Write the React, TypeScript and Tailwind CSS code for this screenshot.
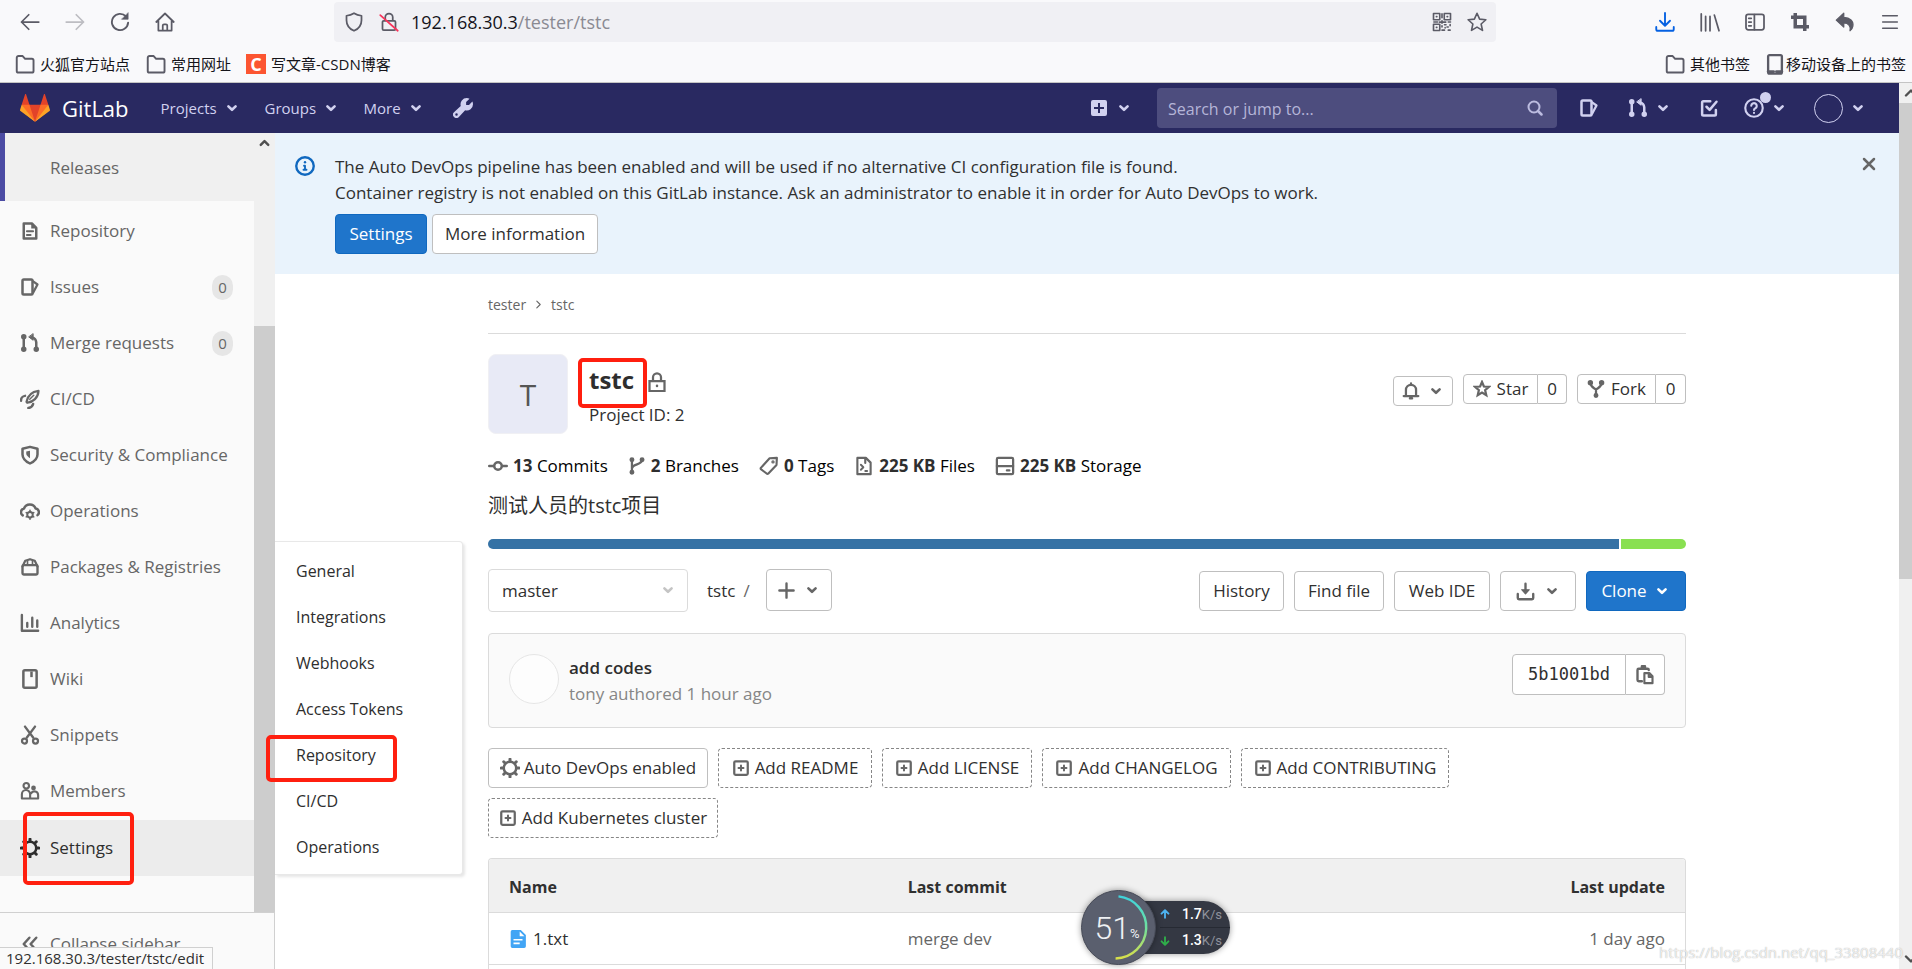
import React from "react";

type IconProps = { className?: string; children: React.ReactNode; box?: string; width?: number };

function Icon({ className = "size-5", children, box = "0 0 16 16", width = 2 }: IconProps) {
  return (
    <svg
      aria-hidden="true"
      viewBox={box}
      className={`shrink-0 ${className}`}
      fill="none"
      stroke="currentColor"
      strokeWidth={width}
      strokeLinecap="round"
      strokeLinejoin="round"
    >
      {children}
    </svg>
  );
}

const Chevron = ({ className = "size-[18px]" }: { className?: string }) => (
  <Icon className={className} width={2.3}><path d="M4.800 6.500 8 9.600l3.200-3.100" /></Icon>
);

const icons = {
  doc: (
    <>
      <path d="M3 2h6.500L13 5.500V14H3z" />
      <path d="M9 1.500v4.500h4.500z" fill="currentColor" stroke="none" />
      <path d="M5.500 8.200h5M5.500 11.200h3" strokeWidth="1.500" />
    </>
  ),
  issues: (
    <>
      <rect x="2" y="2" width="8" height="12" rx="1" />
      <path d="M10.500 3.500 14 6l-3.500 6.500" strokeWidth="1.800" />
    </>
  ),
  merge: (
    <>
      <path d="M3 3v10M13 13V7.500A4.500 4.500 0 0 0 9.500 3.500" />
      <circle cx="3" cy="3" r="1.200" fill="currentColor" /><circle cx="3" cy="13" r="1.200" fill="currentColor" />
      <circle cx="13" cy="13" r="1.200" fill="currentColor" />
      <path d="M10.500.8v5L7.200 3.300z" fill="currentColor" strokeWidth=".8" />
    </>
  ),
  rocket: (
    <>
      <path d="M5.200 10.300C6 6 9 2.300 14.800 1.500 14.500 7 10.500 10.500 5.800 11z" strokeWidth="1.800" />
      <path d="M7.800 8.200 11 5" strokeWidth="1.200" />
      <path d="M4 5.500C2 5.700.8 7.500.8 9.300M10.500 12c-.5 1.700-2 3-3.800 3.200" strokeWidth="2" />
    </>
  ),
  shield: (
    <>
      <path d="M8 1.500 14 3v4.500c0 3-2.500 5.500-6 7.300-3.500-1.800-6-4.300-6-7.300V3z" />
      <path d="M8 4.500v6C6.500 9.500 5 8.200 5 7V5.200z" fill="currentColor" stroke="none" />
    </>
  ),
  cloud: (
    <>
      <path d="M2.200 11.500A3 3 0 0 1 3.200 6 5 5 0 0 1 12.500 6a3 3 0 0 1 1.500 5.300" />
      <circle cx="8" cy="11" r="2.200" strokeWidth="1.600" />
      <path d="M8 7.500v1M8 13.500v1M5 9.300l.8.400M10.200 12.300l.8.400M5 12.700l.8-.4M10.200 9.700l.8-.4" strokeWidth="1.300" />
    </>
  ),
  pack: (
    <>
      <path d="M2 7.500 4.200 3 8 1.800 11.800 3 14 7.500" strokeWidth="1.800" />
      <rect x="2" y="6.500" width="12" height="7.500" rx="1" strokeWidth="1.900" />
      <path d="M6 6.500V3M10 6.500V3" strokeWidth="1.300" />
    </>
  ),
  chart: (
    <path d="M1.500 1.500V14.200h13M5.800 11V8M9.800 11V3.800M13.800 11V6" strokeWidth="1.900" />
  ),
  book: (
    <>
      <rect x="2.700" y="1" width="10.600" height="14" rx="1.200" />
      <path d="M9.200 2v4.500" strokeLinecap="butt" />
    </>
  ),
  scissors: (
    <>
      <path d="M4 1.300 10.500 10M12 1.300 5.500 10" strokeWidth="1.900" />
      <circle cx="3.600" cy="12.800" r="2" strokeWidth="1.800" /><circle cx="12.400" cy="12.800" r="2" strokeWidth="1.800" />
    </>
  ),
  users: (
    <>
      <circle cx="5" cy="3.800" r="2.200" strokeWidth="1.700" /><circle cx="10.800" cy="5.500" r="1.900" fill="currentColor" stroke="none" />
      <path d="M1.500 14V10.500a3.300 3.300 0 0 1 6.600 0V14zM9 9.700a3 3 0 0 1 5.500 1.500V14H8.500" strokeWidth="1.700" />
    </>
  ),
  gear: (
    <>
      <circle cx="8" cy="8" r="5" />
      <path d="M8 .9v1.500M8 13.600v1.500M.9 8h1.500M13.600 8h1.500M3 3l1 1M12 12l1 1M3 13l1-1M12 4l1-1" strokeWidth="2.400" />
    </>
  ),
  plusBox: (
    <>
      <rect x="2" y="2" width="12" height="12" rx="1.200" />
      <path d="M8 5.800v4.400M5.800 8h4.400" strokeWidth="1.800" />
    </>
  ),
  folder: <path d="M2 13V3.500A1.300 1.300 0 0 1 3.300 2.200h3l1.800 2H13a1.200 1.200 0 0 1 1.200 1.200V13A1.200 1.200 0 0 1 13 14.200H3.200A1.200 1.200 0 0 1 2 13z" />,
};

const navItems = [
  { label: "Repository", icon: icons.doc },
  { label: "Issues", icon: icons.issues, count: 0 },
  { label: "Merge requests", icon: icons.merge, count: 0 },
  { label: "CI/CD", icon: icons.rocket },
  { label: "Security & Compliance", icon: icons.shield },
  { label: "Operations", icon: icons.cloud },
  { label: "Packages & Registries", icon: icons.pack },
  { label: "Analytics", icon: icons.chart },
  { label: "Wiki", icon: icons.book },
  { label: "Snippets", icon: icons.scissors },
  { label: "Members", icon: icons.users },
];

const flyout = ["General", "Integrations", "Webhooks", "Access Tokens", "Repository", "CI/CD", "Operations"];

function ToolButton({ label, children, color = "text-[#5b5b66]" }: { label: string; children: React.ReactNode; color?: string }) {
  return (
    <button type="button" aria-label={label} className={`flex h-10 w-[45px] items-center justify-center ${color}`}>
      {children}
    </button>
  );
}

function BrowserChrome() {
  return (
    <div className="shrink-0 border-b border-[#c4c4c4] bg-[#f9f9fb]">
      <div className="flex h-[42px] items-center pt-[2px] pl-[7px]">
        <ToolButton label="Back"><Icon width={1.4}><path d="M15 8H1.200M7 2.200 1.200 8 7 13.800" /></Icon></ToolButton>
        <ToolButton label="Forward" color="text-[#bdbdc2]"><Icon width={1.4}><path d="M1 8h13.800M9 2.200 14.800 8 9 13.800" /></Icon></ToolButton>
        <ToolButton label="Reload">
          <Icon width={1.5}><path d="M14.500 8.500A6.500 6.500 0 1 1 12.800 3.600" /><path d="M14.500.8v5h-5z" fill="currentColor" strokeWidth=".5" /></Icon>
        </ToolButton>
        <ToolButton label="Home">
          <Icon width={1.4}><path d="M1 8 8 1.200 15 8M2.700 7v7.800h10.600V7M6.200 14.500V10.800a1 1 0 0 1 1-1h1.600a1 1 0 0 1 1 1v3.700" /></Icon>
        </ToolButton>
        <div className="mr-[146px] ml-[147px] flex h-10 flex-1 items-center rounded bg-[#f0f0f4] pr-[9px] pl-[10px] text-[#5b5b66]">
          <Icon className="size-5" width={1.4}><path d="M8 1c2 1.300 4 1.800 6 2v3.500c0 4-2.500 7-6 8.500-3.500-1.500-6-4.500-6-8.500V3c2-.2 4-.7 6-2z" /></Icon>
          <span className="ml-[15px] flex">
            <Icon className="size-5" width={1.4}>
              <path d="M5 7V4.200a3 3 0 0 1 6 0V7M3.800 7h8.400a1 1 0 0 1 1 1v5.500a1 1 0 0 1-1 1H3.800a1 1 0 0 1-1-1V8a1 1 0 0 1 1-1z" />
              <path d="M1 2.500 15 15" stroke="#f9345b" />
            </Icon>
          </span>
          <div className="relative ml-3 flex-1 text-[18px] leading-6">
            <span className="pointer-events-none absolute inset-y-0 left-0 text-[#15141a]">192.168.30.3<span className="text-[#8a8a92]">/tester/tstc</span></span>
            <input aria-label="Address" className="w-full bg-transparent outline-none" />
          </div>
          <button type="button" aria-label="QR code" className="flex">
            <Icon width={1.3}>
              <rect x="1.200" y="1.200" width="5" height="5" /><rect x="9.800" y="1.200" width="5" height="5" /><rect x="1.200" y="9.800" width="5" height="5" />
              <path d="M3.500 3.700h.4M12.100 3.700h.4M3.500 12.300h.4M8 1.500v3M8 7v2M1.500 8h3M6 8.100h5M13 8h1.800M8 11v1M8 14.500h2M10 10.200h1.200M12 12h1M14.500 10v1M14.500 14.500h-1.500M10.500 12.500v.3" />
            </Icon>
          </button>
          <button type="button" aria-label="Bookmark this page" className="ml-[15px] flex">
            <Icon width={1.3}><path d="M8 1l2.100 4.700 5 .5-3.800 3.400 1.100 5.100L8 12.100l-4.400 2.600 1.100-5.100L.9 6.200l5-.5z" /></Icon>
          </button>
        </div>
        <ToolButton label="Downloads" color="text-[#0561e2]"><Icon width={1.5}><path d="M8 .8v10M4 7l4 4 4-4M1 12v1.700A1.300 1.300 0 0 0 2.300 15h11.400a1.300 1.300 0 0 0 1.300-1.300V12" /></Icon></ToolButton>
        <ToolButton label="Library"><Icon width={1.4}><path d="M1 1.500v13.500M4.500 3.500v11.500M8 3.500v11.500M11.500 2.500 15.200 15" /></Icon></ToolButton>
        <ToolButton label="Sidebars"><Icon width={1.4}><rect x=".8" y="1.800" width="14.400" height="12.400" rx="1.800" /><path d="M7.500 2v12M3 5h2M3 8h2M3 11h2" /></Icon></ToolButton>
        <ToolButton label="Screenshot"><Icon width={2.8}><path d="M4.200 .8v11h11M.8 4.200h11v11" strokeLinecap="butt" strokeLinejoin="miter" /></Icon></ToolButton>
        <ToolButton label="Undo"><Icon width={1}><path d="M1 6.500 7 1v3.300c5 .2 8 3 7.300 7-.3 1.600-1 2.800-2.300 3.700.8-3.500-.8-6-5-6.200V12z" fill="currentColor" /></Icon></ToolButton>
        <ToolButton label="Menu"><Icon className="size-[18px]" width={1.4}><path d="M1.500 2.500h13M1.500 8h13M1.500 13.500h13" /></Icon></ToolButton>
      </div>
      <div className="flex h-10 items-center justify-between pt-1 pr-[6px] pl-[14px] text-[15px] text-[#15141a]">
        <div className="flex items-center gap-[15px]">
          <a href="#" className="flex items-center gap-1 text-nowrap"><Icon className="size-[22px] text-[#5b5b66]" width={1.4}>{icons.folder}</Icon>火狐官方站点</a>
          <a href="#" className="flex items-center gap-1 text-nowrap"><Icon className="size-[22px] text-[#5b5b66]" width={1.4}>{icons.folder}</Icon>常用网址</a>
          <a href="#" className="flex items-center gap-[5px] text-nowrap">
            <span className="flex size-5 items-center justify-center bg-[#fc5531] text-[18px] leading-5 font-bold text-white">C</span>写文章-CSDN博客
          </a>
        </div>
        <div className="flex items-center gap-[14px]">
          <a href="#" className="flex items-center gap-1 text-nowrap"><Icon className="size-[22px] text-[#5b5b66]" width={1.4}>{icons.folder}</Icon>其他书签</a>
          <a href="#" className="flex items-center text-nowrap">
            <Icon className="size-[22px] text-[#5b5b66]" width={1.7}><rect x="3" y="1.500" width="10" height="13.500" rx="1" /><path d="M3 13.500h4M9 13.500h4" strokeWidth="2" /></Icon>移动设备上的书签
          </a>
        </div>
      </div>
    </div>
  );
}

function Tanuki() {
  return (
    <svg aria-hidden="true" viewBox="0 0 36 36" className="size-[30px] shrink-0">
      <path fill="#e24329" d="M2 14l9.380 9v-9l-4-12.280c-.205-.632-1.176-.632-1.380 0z" />
      <path fill="#e24329" d="M34 14l-9.380 9v-9l4-12.280c.205-.632 1.176-.632 1.380 0z" />
      <path fill="#e24329" d="M18 34.380 3 14h30z" />
      <path fill="#fc6d26" d="M18 34.380 11.380 14H2l4 11z" />
      <path fill="#fc6d26" d="M18 34.380 24.620 14H34l-4 11z" />
      <path fill="#fca326" d="M2 14 .1 20.160c-.18.565 0 1.200.5 1.560l17.420 12.660z" />
      <path fill="#fca326" d="M34 14l1.900 6.160c.18.565 0 1.200-.5 1.560L18 34.380z" />
    </svg>
  );
}

function Navbar() {
  return (
    <header className="flex h-[50px] shrink-0 items-center bg-[#292961] pl-5 text-[#d1d1f0]">
      <a href="#" className="flex items-center gap-3 text-white"><Tanuki /><span className="text-[22px] leading-7">GitLab</span></a>
      <nav className="ml-8 flex items-center gap-6 text-[15px]">
        <button type="button" className="flex w-[80px] items-center justify-between">Projects<Chevron /></button>
        <button type="button" className="flex w-[75px] items-center justify-between">Groups<Chevron /></button>
        <button type="button" className="flex w-[61px] items-center justify-between">More<Chevron /></button>
        <button type="button" aria-label="Admin area" className="ml-1 flex">
          <svg aria-hidden="true" viewBox="0 0 16 16" className="size-5" fill="currentColor">
            <path fillRule="evenodd" d="M11 0c.8 0 1.500.2 2.200.5L10.500 3.200v2.300h2.300l2.700-2.700c.3.700.5 1.400.5 2.200a5 5 0 0 1-6.300 4.800l-5 5.300A2.700 2.700 0 0 1 .8 11.300l5.400-5A5 5 0 0 1 11 0zM2.800 12.200a1 1 0 1 0 1 1 1 1 0 0 0-1-1z" />
          </svg>
        </button>
      </nav>
      <div className="ml-auto flex items-center pr-8">
        <button type="button" aria-label="New" className="flex items-center gap-2">
          <svg aria-hidden="true" viewBox="0 0 16 16" className="size-4" fill="currentColor"><path fillRule="evenodd" d="M2 0h12a2 2 0 0 1 2 2v12a2 2 0 0 1-2 2H2a2 2 0 0 1-2-2V2a2 2 0 0 1 2-2zm5 3v4H3v2h4v4h2V9h4V7H9V3z" /></svg>
          <Chevron />
        </button>
        <div className="relative ml-6">
          <input aria-label="Search or jump to" placeholder="Search or jump to..." className="h-10 w-[400px] rounded bg-[#4d4d7e] pt-[2px] pr-10 pl-[11px] text-[16px] outline-none placeholder:text-[#b5b5d8]" />
          <span className="pointer-events-none absolute top-3 right-[14px]"><Icon className="size-4 text-[#bcbce0]"><circle cx="7" cy="7" r="5.500" /><path d="m11 11 3.500 3.500" strokeWidth="2.500" /></Icon></span>
        </div>
        <button type="button" aria-label="Issues" className="ml-[22px] flex"><Icon>{icons.issues}</Icon></button>
        <button type="button" aria-label="Merge requests" className="ml-[29px] flex items-center gap-[6px]"><Icon>{icons.merge}</Icon><Chevron /></button>
        <button type="button" aria-label="To-do list" className="ml-[27px] flex">
          <Icon><path d="M9 2.500H3.500a1 1 0 0 0-1 1V13a1 1 0 0 0 1 1h9a1 1 0 0 0 1-1V9.500M6 7l2.500 2.500L14 3" /></Icon>
        </button>
        <button type="button" aria-label="Help" className="relative ml-[25px] flex items-center gap-[6px]">
          <Icon className="size-5" width={1.7}><circle cx="8" cy="8" r="7" /><path d="M5.800 6.200a2.200 2.200 0 1 1 3.300 2C8.300 8.600 8 8.900 8 9.500M8 11.900v.1" /></Icon>
          <span className="absolute -top-[6px] left-4 size-[11px] rounded-full bg-[#d1d1f0]" />
          <Chevron />
        </button>
        <button type="button" aria-label="Account" className="ml-[26px] flex items-center gap-[6px]">
          <span className="size-[29px] rounded-full border border-[#d1d1f0]" />
          <Chevron />
        </button>
      </div>
    </header>
  );
}

function Sidebar() {
  return (
    <aside className="relative z-10 flex w-[275px] shrink-0 flex-col bg-[#fafafa] text-[17px] text-[#666]">
      <div className="flex h-[779px] shrink-0">
        <nav className="min-w-0 flex-1">
          <a href="#" className="mb-[2px] flex h-[68px] items-center border-l-[5px] border-[#4b4ba3] bg-[#f0f0f0] pt-[2px] pl-[45px]">Releases</a>
          <ul>
            {navItems.map((item) => (
              <li key={item.label}>
                <a href="#" className="flex h-14 items-center pr-[21px] pl-5">
                  <Icon>{item.icon}</Icon>
                  <span className="ml-[10px] flex-1 text-nowrap">{item.label}</span>
                  {item.count !== undefined && (
                    <span className="flex h-[25px] w-[21px] items-center justify-center rounded-full bg-[#e6e6e6] text-[15px]">{item.count}</span>
                  )}
                </a>
              </li>
            ))}
            <li className="relative mt-px">
              <a href="#" className="flex h-14 items-center bg-[#ececec] pl-5 text-[#2e2e2e]">
                <Icon>{icons.gear}</Icon><span className="ml-[10px]">Settings</span>
              </a>
              <span className="pointer-events-none absolute -top-2 left-[23px] h-[73px] w-[111px] rounded-[5px] border-4 border-[#ff1f0f]" />
              <div className="absolute bottom-px left-[275px] w-[188px] rounded-r border border-l-0 border-[#e8e8e8] bg-white pt-[6px] pb-1 text-[16px] text-[#2e2e2e] shadow-[2px_2px_3px_rgba(0,0,0,0.1)]">
                <ul>
                  {flyout.map((name) => (
                    <li key={name} className="relative">
                      <a href="#" className="flex h-[46px] items-center pl-[21px]">{name}</a>
                      {name === "Repository" && (
                        <span className="pointer-events-none absolute top-[3px] -left-[9px] h-[47px] w-[131px] rounded-[5px] border-4 border-[#ff1f0f]" />
                      )}
                    </li>
                  ))}
                </ul>
              </div>
            </li>
          </ul>
        </nav>
        <div className="flex w-[21px] flex-col bg-[#f0f0f0]">
          <div className="flex h-[193px] justify-center pt-[2px] text-[#505050]"><Icon className="size-[15px]" width={2.6}><path d="M4 10.500 8 6.500l4 4" /></Icon></div>
          <div className="flex-1 bg-[#cdcdcd]" />
        </div>
      </div>
      <button type="button" className="flex h-[62px] shrink-0 items-center border-t border-r border-[#d0d0d0] pl-5">
        <Icon><path d="M7.500 3 3 8l4.500 5M13 3 8.500 8l4.500 5" /></Icon>
        <span className="ml-[10px]">Collapse sidebar</span>
      </button>
    </aside>
  );
}

const outline = "flex items-center justify-center rounded border border-[#bfbfbf] bg-white text-nowrap";

function Banner() {
  return (
    <section className="flex h-[141px] items-start bg-[#e9f3fc] pt-[21px] pr-[20px] pl-5">
      <Icon className="mt-[2px] size-5 text-[#1068bf]" width={1.9}><circle cx="8" cy="8" r="7" /><path d="M8 7.800v3.200M7.200 7.800H8M6.800 11h2.400" strokeWidth="1.500" /><path d="M8 4.900v.1" /></Icon>
      <div className="ml-5 flex-1">
        <p className="leading-[26px]">The Auto DevOps pipeline has been enabled and will be used if no alternative CI configuration file is found.<br />Container registry is not enabled on this GitLab instance. Ask an administrator to enable it in order for Auto DevOps to work.</p>
        <div className="mt-2 flex gap-[5px]">
          <button type="button" className="h-10 w-[92px] rounded border border-[#1068bf] bg-[#1f75cb] text-white">Settings</button>
          <button type="button" className={`${outline} h-10 w-[166px]`}>More information</button>
        </div>
      </div>
      <button type="button" aria-label="Dismiss" className="flex text-[#666]"><Icon className="size-5" width={2}><path d="M4 4l8 8M12 4l-8 8" /></Icon></button>
    </section>
  );
}

function Stat({ icon, value, label }: { icon: React.ReactNode; value: string; label: string }) {
  return (
    <a href="#" className="flex items-center gap-[5px] text-black">
      <span className="text-[#666]">{icon}</span>
      <span><b className="font-bold text-[#2e2e2e]">{value}</b> {label}</span>
    </a>
  );
}

function ProjectHeader() {
  return (
    <>
      <div className="mt-5 flex items-start">
        <div className="flex size-20 items-center justify-center rounded-lg border border-[#f0f0f4] bg-[#e8eaf6] text-[30px] text-[#555]">T</div>
        <div className="relative ml-[21px] pt-2">
          <div className="flex items-center">
            <h1 className="w-[57px] text-[24px] leading-9 font-bold text-[#2e2e2e]">tstc</h1>
            <Icon className="mt-[3px] ml-px size-5 text-[#666]" width={1.8}><path d="M4.800 6.800V4.200a3.200 3.200 0 0 1 6.400 0v2.600M2 7.200h12v8H2z" strokeLinejoin="miter" /><path d="M8 11v.2" strokeWidth="2" /></Icon>
          </div>
          <p className="mt-1">Project ID: 2</p>
          <span className="pointer-events-none absolute top-1 -left-[11px] h-[50px] w-[69px] rounded-[5px] border-4 border-[#ff1f0f]" />
        </div>
        <div className="ml-auto flex items-start gap-[10px] pt-5">
          <button type="button" aria-label="Notifications" className={`${outline} mt-[2px] h-[30px] w-[60px] gap-[7px] text-[#666]`}>
            <Icon className="size-[18px]"><path d="M3.500 12V7a4.500 4.500 0 0 1 9 0v5M1.500 12.500h13M7 14.600h2M8 1.200v.5" /></Icon><Chevron />
          </button>
          <div className="flex">
            <button type="button" className={`${outline} h-[30px] w-[75px] gap-[6px] rounded-r-none`}>
              <Icon className="size-[18px] text-[#666]"><path d="M8 1.800l1.700 4 4.500.3-3.400 2.900 1 4.500L8 11.200l-3.800 2.300 1-4.500-3.400-2.900 4.500-.3z" strokeLinejoin="miter" /></Icon>Star
            </button>
            <a href="#" className={`${outline} h-[30px] w-[29px] rounded-l-none border-l-0`}>0</a>
          </div>
          <div className="flex">
            <button type="button" className={`${outline} h-[30px] w-[79px] gap-[6px] rounded-r-none`}>
              <Icon className="size-[18px] text-[#666]"><path d="M3 2.500C3 6 5 6.500 8 8.500c3-2 5-2.500 5-6M8 8.500V13.500" /><circle cx="3" cy="2.500" r="1.400" fill="currentColor" /><circle cx="13" cy="2.500" r="1.400" fill="currentColor" /><circle cx="8" cy="13.800" r="1.200" fill="currentColor" /></Icon>Fork
            </button>
            <a href="#" className={`${outline} h-[30px] w-[30px] rounded-l-none border-l-0`}>0</a>
          </div>
        </div>
      </div>
      <div className="mt-5 flex h-6 items-center gap-5">
        <Stat icon={<Icon><circle cx="8" cy="8" r="3" /><path d="M1 8h3.500M11.500 8H15" /></Icon>} value="13" label="Commits" />
        <Stat icon={<Icon className="size-[18px]"><path d="M3.500 2.500v11M12.500 2.500c0 5-9 3-9 8" /><circle cx="3.500" cy="2.500" r="1.200" fill="currentColor" /><circle cx="12.500" cy="2.500" r="1.200" fill="currentColor" /><circle cx="3.500" cy="13.500" r="1.200" fill="currentColor" /></Icon>} value="2" label="Branches" />
        <Stat icon={<Icon width={1.7}><path d="M1.500 9.500 8.500 1.800l5.800-.3-.3 5.700L7.500 14a1 1 0 0 1-1.400 0L1.500 10.500a.7.700 0 0 1 0-1z" /><circle cx="11.200" cy="4.700" r=".5" /></Icon>} value="0" label="Tags" />
        <Stat icon={<Icon width={1.7}><path d="M2.700 1.500H9.500l3.800 3.800v9.200H2.700zM9 1.500v4" /><path d="m5.500 7 2 2-2 2M9 12h1.500" strokeWidth="1.500" /></Icon>} value="225 KB" label="Files" />
        <Stat icon={<Icon width={1.8}><rect x="1.500" y="1.500" width="13" height="13" rx="1" /><path d="M1.500 8h13M9.500 11.500h2" /></Icon>} value="225 KB" label="Storage" />
      </div>
      <p className="mt-[15px] text-[20px] leading-[26px]">测试人员的tstc项目</p>
      <div className="mt-5 flex h-[10px] gap-[2px] overflow-hidden rounded-full">
        <div className="flex-1 bg-[#3572a5]" />
        <div className="w-[5.4%] bg-[#89e051]" />
      </div>
    </>
  );
}

function TreeControls() {
  return (
    <div className="mt-5 flex items-start">
      <div className="relative">
        <select aria-label="Branch" className="h-[43px] w-[200px] appearance-none rounded border border-[#dbdbdb] bg-white pl-[13px]">
          <option>master</option>
        </select>
        <span className="pointer-events-none absolute top-3 right-[11px] text-[#c4c4c4]"><Chevron /></span>
      </div>
      <div className="ml-[19px] flex h-[43px] w-[59px] items-center gap-2"><a href="#">tstc</a><span className="text-[#666]">/</span></div>
      <button type="button" aria-label="Add to tree" className={`${outline} h-[42px] w-[66px] gap-[7px] text-[#666]`}>
        <Icon className="size-[19px]"><path d="M8 2v12M2 8h12" /></Icon><Chevron />
      </button>
      <div className="ml-auto flex gap-[10px] pt-[2px]">
        <a href="#" className={`${outline} h-10 w-[85px]`}>History</a>
        <a href="#" className={`${outline} h-10 w-[90px]`}>Find file</a>
        <a href="#" className={`${outline} h-10 w-[96px]`}>Web IDE</a>
        <button type="button" aria-label="Download" className={`${outline} h-10 w-[76px] gap-2 text-[#666]`}>
          <Icon className="size-[19px]"><path d="M8 1.500v7M1.500 10v3.500a1 1 0 0 0 1 1h11a1 1 0 0 0 1-1V10" /><path d="M4.800 6.500h6.400L8 10z" fill="currentColor" strokeWidth="1" /></Icon><Chevron />
        </button>
        <button type="button" className="flex h-10 w-[100px] items-center justify-center gap-[6px] rounded border border-[#1068bf] bg-[#1f75cb] text-white">Clone<Chevron /></button>
      </div>
    </div>
  );
}

const dashed = "flex h-10 items-center justify-center gap-[5px] rounded border border-dashed border-[#868686] text-nowrap";

function AddLink({ label, width }: { label: string; width: string }) {
  return <a href="#" className={`${dashed} ${width}`}><Icon className="size-[18px] text-[#666]">{icons.plusBox}</Icon>{label}</a>;
}

function Project() {
  return (
    <div className="mx-auto w-full max-w-[1198px]">
      <nav aria-label="Breadcrumb" className="flex h-[60px] items-center gap-2 border-b border-[#dbdbdb] pt-[2px] text-[14px] text-[#666]">
        <a href="#">tester</a>
        <Icon className="size-[9px]"><path d="m5 2 6 6-6 6" /></Icon>
        <a href="#">tstc</a>
      </nav>
      <ProjectHeader />
      <TreeControls />
      <section className="mt-[21px] flex h-[95px] items-start rounded border border-[#dbdbdb] bg-[#fafafa] px-5 pt-5">
        <span className="size-[50px] rounded-full border border-[#e6e6e6] bg-[#fdfdfd]" />
        <div className="ml-[10px] pt-px leading-[26px]">
          <a href="#" className="font-semibold text-[#2e2e2e]">add codes</a>
          <p className="text-[#868686]">tony authored 1 hour ago</p>
        </div>
        <div className="ml-auto flex">
          <span className="flex h-[41px] w-[114px] items-center justify-center rounded-l border border-[#bfbfbf] bg-white font-['DejaVu_Sans_Mono',monospace]">5b1001bd</span>
          <button type="button" aria-label="Copy commit SHA" className={`${outline} h-[41px] w-[39px] rounded-l-none border-l-0 text-[#666]`}>
            <Icon width={1.9}><path d="M5.500 13H3a1 1 0 0 1-1-1V4a1 1 0 0 1 1-1h7a1 1 0 0 1 1 1M5 2.700h3" /><path d="M5.500 1h2.500v2H5.500z" fill="currentColor" /><path d="M7.500 6.500h4L14 9v5.500H7.500zM11 6.500v3h3" strokeWidth="1.700" /></Icon>
          </button>
        </div>
      </section>
      <div className="mt-5 flex max-w-[1000px] flex-wrap gap-[10px]">
        <a href="#" className={`${outline} h-10 w-[220px] gap-1`}><Icon className="size-5 text-[#666]">{icons.gear}</Icon>Auto DevOps enabled</a>
        <AddLink label="Add README" width="w-[154px]" />
        <AddLink label="Add LICENSE" width="w-[150px]" />
        <AddLink label="Add CHANGELOG" width="w-[189px]" />
        <AddLink label="Add CONTRIBUTING" width="w-[208px]" />
        <AddLink label="Add Kubernetes cluster" width="w-[230px]" />
      </div>
      <div className="mt-5 overflow-hidden rounded-t border border-b-0 border-[#dbdbdb]">
        <table className="w-full table-fixed text-left">
          <thead className="bg-[#f0f0f0]">
            <tr className="h-[53px] border-b border-[#dbdbdb]">
              <th className="w-1/3 pt-[3px] pl-5 text-[16px] font-bold">Name</th>
              <th className="pt-[3px] pl-5 text-[16px] font-bold">Last commit</th>
              <th className="w-1/5 pt-[3px] pr-5 text-right text-[16px] font-bold">Last update</th>
            </tr>
          </thead>
          <tbody>
            <tr className="h-[52px] border-b border-[#dbdbdb]">
              <td className="pt-[2px] pl-5">
                <a href="#" className="flex items-center gap-[6px]">
                  <svg aria-hidden="true" viewBox="0 0 16 16" className="size-[18px]"><path fill="#42a5f5" fillRule="evenodd" d="M3 0h7.500L15 4.500V14.500a1.500 1.500 0 0 1-1.500 1.500H3a1.500 1.500 0 0 1-1.500-1.500v-13A1.500 1.500 0 0 1 3 0zm6.500 1.300V5.500h4.200zM4 8v1.400h8V8zm0 3.200v1.400h5.500v-1.400z" /></svg>
                  1.txt
                </a>
              </td>
              <td className="pt-[2px] pl-5 text-[#666]">merge dev</td>
              <td className="pt-[2px] pr-5 text-right text-[#666]">1 day ago</td>
            </tr>
            <tr className="h-[52px]"><td /><td /><td /></tr>
          </tbody>
        </table>
      </div>
    </div>
  );
}

function Speed({ value, color, children }: { value: string; color: string; children: React.ReactNode }) {
  return (
    <div className="flex h-[26px] items-center">
      <Icon className={`size-[10px] ${color}`} width={3}>{children}</Icon>
      <span className="ml-3 text-[14px] font-medium">{value}</span>
      <span className="pt-px text-[13px] text-[#8f929c]">K/s</span>
    </div>
  );
}

function SpeedWidget() {
  return (
    <div className="absolute bottom-1 left-[1081px] flex items-center font-[Roboto,sans-serif]">
      <div className="relative z-10 flex size-[75px] items-center justify-center rounded-full border border-[#474b58] bg-[#5a5f6e] pr-[3px] text-[#eef0f3] shadow-[0_0_6px_rgba(0,0,0,0.4)]">
        <svg aria-hidden="true" viewBox="0 0 75 75" className="absolute inset-0 size-full" fill="none">
          <defs><linearGradient id="ring" x1="0" y1="0" x2="0" y2="1"><stop offset="0" stopColor="#3fd3dc" /><stop offset=".5" stopColor="#6fe0a0" /><stop offset="1" stopColor="#d8df4a" /></linearGradient></defs>
          <path d="M37.500 5.500a32 32 0 0 1-3 63.800" stroke="url(#ring)" strokeWidth="2.500" />
        </svg>
        <span className="text-[32px] leading-9 font-light">51</span><span className="mt-3 text-[13px]">%</span>
      </div>
      <div className="-ml-[30px] flex h-[53px] w-[104px] flex-col justify-center divide-y divide-[#262a33] rounded-r-full bg-[#343843] pl-[34px] text-white shadow-[0_0_6px_rgba(0,0,0,0.4)]">
        <Speed value="1.7" color="text-[#4db2ef]"><path d="M8 14V3M2.500 7.500 8 2l5.500 5.500" /></Speed>
        <Speed value="1.3" color="text-[#2fae4a]"><path d="M8 2v11M2.500 8.500 8 14l5.500-5.500" /></Speed>
      </div>
    </div>
  );
}

export default function App() {
  return (
    <div className="relative flex h-screen flex-col overflow-hidden bg-white font-['Open_Sans','Noto_Sans_CJK_SC',sans-serif] text-[17px] text-[#303030]">
      <BrowserChrome />
      <div className="flex min-h-0 flex-1">
        <div className="flex min-w-0 flex-1 flex-col">
          <Navbar />
          <div className="flex min-h-0 flex-1">
            <Sidebar />
            <main className="min-w-0 flex-1 overflow-hidden"><Banner /><Project /></main>
          </div>
        </div>
        <div className="flex w-[13px] shrink-0 flex-col justify-between overflow-hidden bg-[#f0f0f0] text-[#505050]">
          <div className="flex-1">
            <div className="flex h-5 items-center pl-1"><Icon className="size-4" width={2.4}><path d="M3 10.500 8 5.500l5 5" /></Icon></div>
            <div className="h-[55%] bg-[#cdcdcd]" />
          </div>
          <div className="flex h-5 items-center pl-1"><Icon className="size-4" width={2.4}><path d="M3 5.500l5 5 5-5" /></Icon></div>
        </div>
      </div>
      <div className="absolute bottom-0 left-0 z-20 flex h-[22px] items-center border-t border-r border-[#d0d0d0] bg-[#fafafa] pr-2 pl-[6px] text-[15px]">192.168.30.3/tester/tstc/edit</div>
      <SpeedWidget />
      <div className="pointer-events-none absolute right-[9px] bottom-[6px] text-[15px] text-white/80 [text-shadow:0_0_1px_#999]">https://blog.csdn.net/qq_33808440</div>
    </div>
  );
}
